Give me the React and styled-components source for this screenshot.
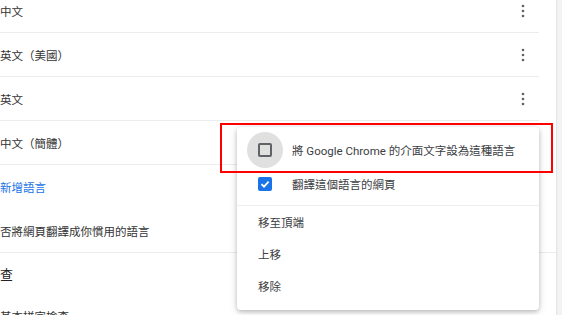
import React from "react";
import styled, { createGlobalStyle } from "styled-components";

const GlobalStyle = createGlobalStyle`
  html, body {
    margin: 0;
    background: #f1f3f4;
  }
  body {
    font-family: Roboto, "Noto Sans CJK TC", sans-serif;
    font-size: 11.5px;
    color: #333;
  }
`;

const Page = styled.div`
  position: relative;
  width: 562px;
  height: 315px;
  overflow: hidden;
  display: flex;
`;

const Card = styled.div`
  width: 556px;
  flex: none;
  background: #fff;
  box-shadow: 0 0 2px rgba(0, 0, 0, 0.18);
  display: flex;
  flex-direction: column;
`;

const LangList = styled.div`
  flex: none;
  margin-top: -11px;
  margin-right: 17px;
`;

const LangRow = styled.div`
  box-sizing: border-box;
  height: 44px;
  border-bottom: 1px solid #ececec;
  display: flex;
  align-items: center;
  justify-content: space-between;
`;

const MoreButton = styled.div`
  width: 32px;
  height: 32px;
  display: flex;
  align-items: center;
  justify-content: center;
  color: #5f6368;
`;

const Row = styled.div`
  flex: none;
  box-sizing: border-box;
  height: ${(p) => p.$height || 44}px;
  display: flex;
  align-items: center;
  color: ${(p) => (p.$link ? "#1a73e8" : "#333")};
  border-bottom: ${(p) => (p.$divider ? "1px solid #ececec" : "none")};
  white-space: nowrap;
`;

const Heading = styled(Row)`
  font-size: 13px;
  color: #202124;
`;

const Menu = styled.div`
  position: absolute;
  left: 237px;
  top: 127px;
  width: 302px;
  z-index: 2;
  background: #fff;
  border-radius: 4px;
  box-shadow: 0 2px 4px rgba(0, 0, 0, 0.2), 0 1px 10px rgba(0, 0, 0, 0.12);
  padding: 6px 0 8px;
  color: #3c4043;
`;

const CheckRow = styled.div`
  height: 34px;
  display: flex;
  align-items: center;
  gap: 20px;
  padding-left: 21px;
`;

const Checkbox = styled.div`
  position: relative;
  box-sizing: border-box;
  width: 14px;
  height: 14px;
  border-radius: 2px;
  border: 2px solid ${(p) => (p.$checked ? "#1a73e8" : "#5f6368")};
  background: ${(p) => (p.$checked ? "#1a73e8" : "transparent")};
  display: flex;
  align-items: center;
  justify-content: center;

  &::before {
    content: "";
    display: ${(p) => (p.$focused ? "block" : "none")};
    position: absolute;
    left: 50%;
    top: 50%;
    width: 36px;
    height: 36px;
    border-radius: 50%;
    background: rgba(0, 0, 0, 0.12);
    transform: translate(-50%, -50%);
    z-index: -1;
  }
`;

const MenuDivider = styled.div`
  margin-top: 4px;
  border-top: 1px solid #eeeeee;
`;

const MenuItem = styled.div`
  height: 32px;
  display: flex;
  align-items: center;
  padding-left: 21px;
`;

const Highlight = styled.div`
  position: absolute;
  left: 220px;
  top: 123px;
  width: 333px;
  height: 50px;
  box-sizing: border-box;
  border: 2px solid #ff0000;
  z-index: 3;
`;

const Kebab = () => (
  <svg width="4" height="14" viewBox="0 0 4 14" fill="currentColor">
    <circle cx="2" cy="2" r="1.3" />
    <circle cx="2" cy="7" r="1.3" />
    <circle cx="2" cy="12" r="1.3" />
  </svg>
);

const Check = () => (
  <svg width="10" height="10" viewBox="0 0 10 10">
    <path d="M1.5 5.2 L4 7.6 L8.6 2.6" fill="none" stroke="#fff" strokeWidth="1.8" />
  </svg>
);

const languages = ["中文", "英文（美國）", "英文", "中文（簡體）"];

export default () => (
  <>
    <GlobalStyle />
    <Page>
      <Card>
        <LangList>
          {languages.map((lang) => (
            <LangRow key={lang}>
              <span>{lang}</span>
              <MoreButton>
                <Kebab />
              </MoreButton>
            </LangRow>
          ))}
        </LangList>
        <Row $link>新增語言</Row>
        <Row $divider>否將網頁翻譯成你慣用的語言</Row>
        <Heading $height={40}>查</Heading>
        <Row $height={46}>基本拼字檢查</Row>
      </Card>

      <Menu>
        <CheckRow>
          <Checkbox $focused />
          <span>將 Google Chrome 的介面文字設為這種語言</span>
        </CheckRow>
        <CheckRow>
          <Checkbox $checked>
            <Check />
          </Checkbox>
          <span>翻譯這個語言的網頁</span>
        </CheckRow>
        <MenuDivider />
        <MenuItem>移至頂端</MenuItem>
        <MenuItem>上移</MenuItem>
        <MenuItem>移除</MenuItem>
      </Menu>
      <Highlight />
    </Page>
  </>
);
